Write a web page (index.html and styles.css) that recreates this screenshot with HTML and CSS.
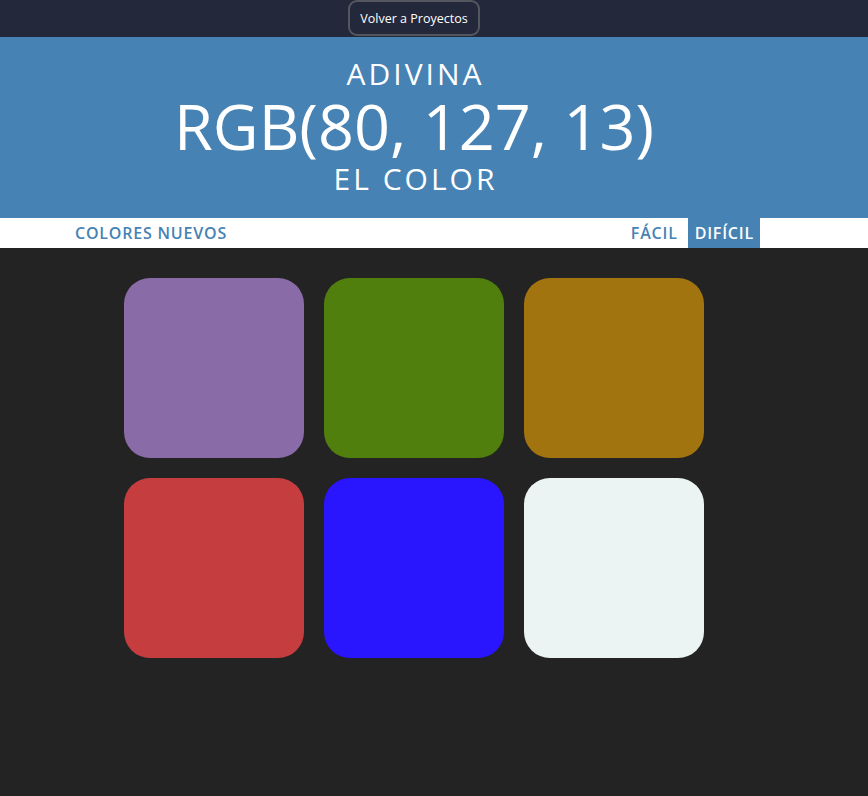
FILE: index.html
```html
<!DOCTYPE html>
<html lang="es">
<head>
<meta charset="utf-8">
<title>Adivina el color</title>
<link rel="stylesheet" href="styles.css">
</head>
<body>
<div class="topbar">
  <a class="back" href="#">Volver a Proyectos</a>
</div>
<header class="hero">
  <div class="hero-top">ADIVINA</div>
  <div class="hero-rgb">RGB(80, 127, 13)</div>
  <div class="hero-bottom">EL COLOR</div>
</header>
<nav class="stripe">
  <div class="stripe-inner">
    <button class="nav-btn">COLORES NUEVOS</button>
    <span class="spacer"></span>
    <button class="nav-btn easy">FÁCIL</button>
    <button class="nav-btn selected">DIFÍCIL</button>
  </div>
</nav>
<main class="board">
  <div class="grid">
    <div class="square" style="background:#896ba7"></div>
    <div class="square" style="background:#507f0d"></div>
    <div class="square" style="background:#a2740f"></div>
    <div class="square" style="background:#c53d3f"></div>
    <div class="square" style="background:#2916fe"></div>
    <div class="square" style="background:#ebf4f2"></div>
  </div>
</main>
</body>
</html>
```
FILE: styles.css
```css
* { box-sizing: border-box; }
html, body {
  margin: 0;
  padding: 0;
  height: 100%;
}
body {
  background: #232323;
  font-family: "Open Sans", "DejaVu Sans", sans-serif;
}
.topbar {
  height: 37px;
  background: #24283b;
  display: flex;
  justify-content: center;
  padding-right: 40px;
}
.back {
  display: flex;
  align-items: center;
  justify-content: center;
  width: 132px;
  height: 36px;
  border: 2px solid #55575f;
  border-radius: 9px;
  color: #ffffff;
  font-size: 12.5px;
  text-decoration: none;
}
.hero {
  background: #4682b4;
  color: #ffffff;
  text-align: center;
  height: 181px;
  padding-top: 18px;
  padding-right: 40px;
  font-weight: 400;
}
.hero-top {
  font-size: 30px;
  line-height: 37px;
  letter-spacing: 3px;
  padding-left: 3px;
}
.hero-rgb {
  font-size: 63px;
  line-height: 68px;
}
.hero-bottom {
  font-size: 30px;
  line-height: 37px;
  letter-spacing: 3px;
  padding-left: 3px;
}
.stripe {
  background: #ffffff;
  height: 30px;
}
.stripe-inner {
  display: flex;
  height: 30px;
  margin-left: 68px;
  width: 692px;
}
.spacer { flex: 1; }
.nav-btn {
  border: none;
  background: transparent;
  color: #4682b4;
  font-family: inherit;
  font-size: 16px;
  font-weight: 600;
  letter-spacing: 0.8px;
  padding: 0 6px 0 7px;
  height: 30px;
  cursor: pointer;
}
.nav-btn.easy {
  padding-right: 10px;
}
.nav-btn.selected {
  background: #4682b4;
  color: #ffffff;
}
.board {
  padding-top: 30px;
}
.grid {
  display: grid;
  grid-template-columns: repeat(3, 180px);
  gap: 20px;
  margin-left: 124px;
}
.square {
  width: 180px;
  height: 180px;
  border-radius: 26px;
}
```
